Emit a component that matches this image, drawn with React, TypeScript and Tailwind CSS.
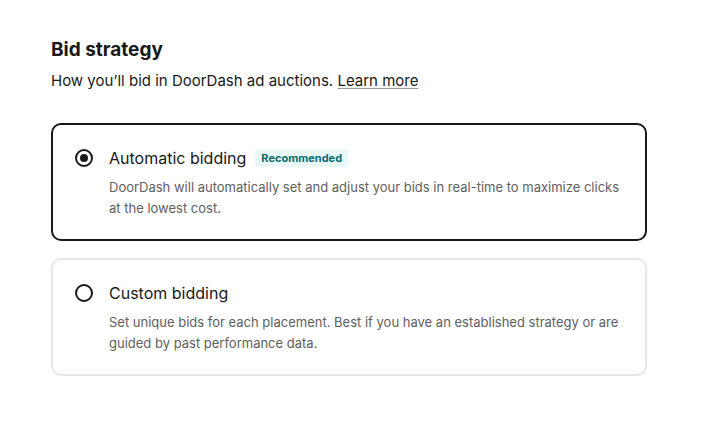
import React from 'react';

const options = [
  {
    id: 'auto',
    title: 'Automatic bidding',
    badge: 'Recommended',
    desc: 'DoorDash will automatically set and adjust your bids in real-time to maximize clicks at the lowest cost.',
    selected: true,
  },
  {
    id: 'custom',
    title: 'Custom bidding',
    badge: null,
    desc: 'Set unique bids for each placement. Best if you have an established strategy or are guided by past performance data.',
    selected: false,
  },
];

const App: React.FC = () => {
  return (
    <div className="w-[717px] h-[425px] bg-white pl-[51px] pr-[70px] pt-[37px] font-['Inter',sans-serif] text-[#191919]">
      {/* Header */}
      <h1 className="text-[19px] font-bold leading-[25px]">Bid strategy</h1>
      <p className="mt-[8px] text-[15px] leading-[22px]">
        How you’ll bid in DoorDash ad auctions.{' '}
        <span className="underline underline-offset-2 decoration-[#999]">Learn more</span>
      </p>

      {/* Options */}
      <div className="mt-[31px] flex flex-col gap-[17px]">
        {options.map((opt) => (
          <div
            key={opt.id}
            className={`rounded-[10px] border-2 pl-[22px] pr-[20px] pt-[23px] pb-[20px] ${
              opt.selected ? 'border-[#191919]' : 'border-[#e7e7e7]'
            }`}
          >
            <div className="flex items-center h-[20px]">
              <span className="w-[18px] h-[18px] rounded-full border-2 border-[#191919] flex items-center justify-center">
                {opt.selected && <span className="w-[8px] h-[8px] rounded-full bg-[#191919]" />}
              </span>
              <span className="ml-[16px] text-[16px]">{opt.title}</span>
              {opt.badge && (
                <span className="ml-[9px] bg-[#e9f8f8] text-[#0b6e6e] text-[11px] font-bold px-[6px] h-[18px] flex items-center rounded-[3px]">
                  {opt.badge}
                </span>
              )}
            </div>
            <p className="ml-[34px] mt-[9px] text-[13px] leading-[21px] text-[#606060]">{opt.desc}</p>
          </div>
        ))}
      </div>
    </div>
  );
};

export default App;
